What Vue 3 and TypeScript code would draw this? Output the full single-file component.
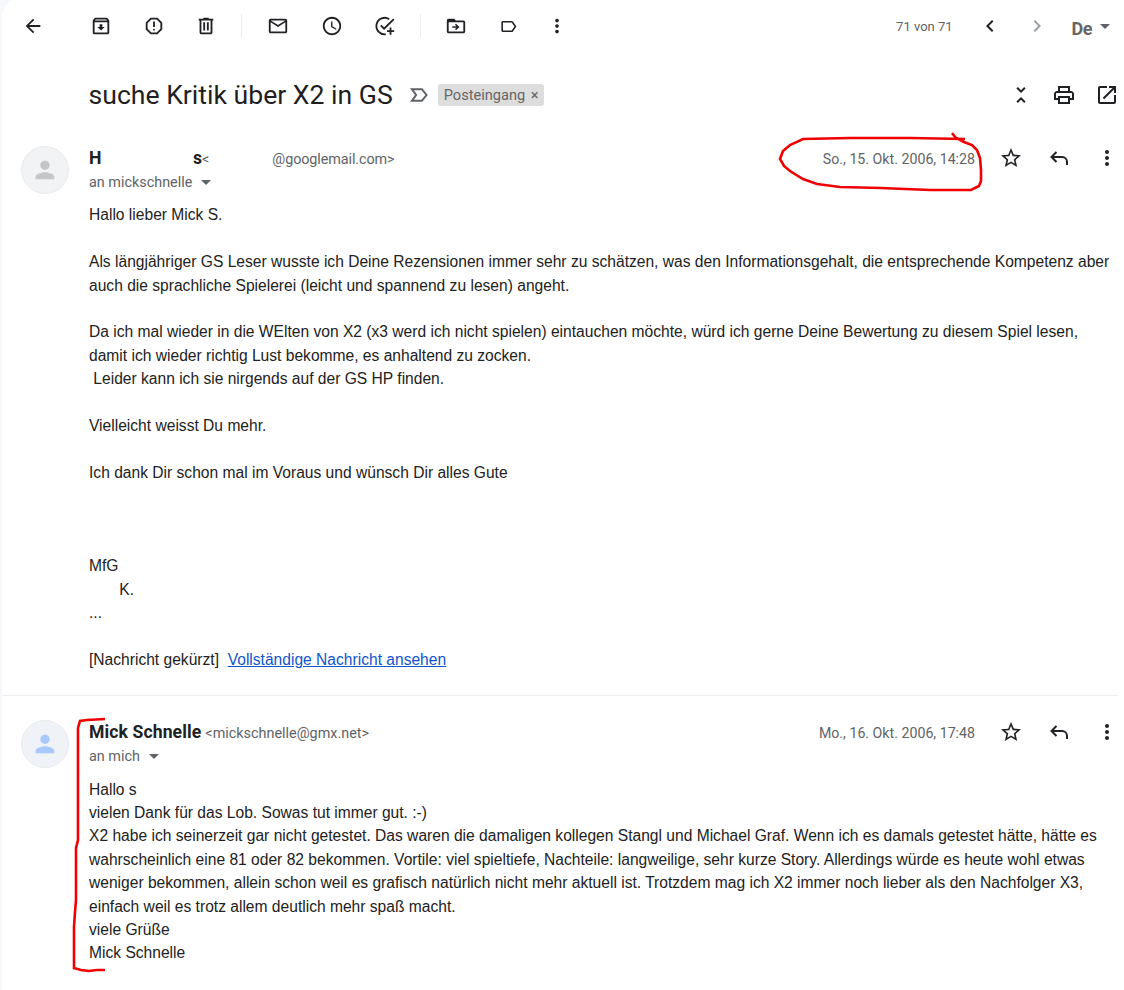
<script setup lang="ts">
const icons: Record<string, string> = {
  back: 'M20 11H7.83l5.59-5.59L12 4l-8 8 8 8 1.41-1.41L7.83 13H20v-2z',
  archive: 'M20.54 5.23l-1.39-1.68C18.88 3.21 18.47 3 18 3H6c-.47 0-.88.21-1.16.55L3.46 5.23C3.17 5.57 3 6.02 3 6.5V19c0 1.1.9 2 2 2h14c1.1 0 2-.9 2-2V6.5c0-.48-.17-.93-.46-1.27zM6.24 5h11.52l.83 1H5.42l.82-1zM5 19V8h14v11H5zm8.45-9h-2.9v3H8l4 4 4-4h-2.55z',
  report: 'M15.73 3H8.27L3 8.27v7.46L8.27 21h7.46L21 15.73V8.27L15.73 3zM19 14.9L14.9 19H9.1L5 14.9V9.1L9.1 5h5.8L19 9.1v5.8zM11 7h2v6h-2zM12 15a1 1 0 1 0 0 2 1 1 0 0 0 0-2z',
  trash: 'M15 4V3H9v1H4v2h1v13c0 1.1.9 2 2 2h10c1.1 0 2-.9 2-2V6h1V4h-5zm2 15H7V6h10v13zM9 8h2v9H9zm4 0h2v9h-2z',
  mail: 'M20 4H4c-1.1 0-2 .9-2 2v12c0 1.1.9 2 2 2h16c1.1 0 2-.9 2-2V6c0-1.1-.9-2-2-2zm0 14H4V8l8 5 8-5v10zm-8-7L4 6h16l-8 5z',
  clock: 'M11.99 2C6.47 2 2 6.48 2 12s4.47 10 9.99 10C17.52 22 22 17.52 22 12S17.52 2 11.99 2zM12 20c-4.42 0-8-3.58-8-8s3.58-8 8-8 8 3.58 8 8-3.58 8-8 8zM12.5 7H11v6l5.25 3.15.75-1.23-4.5-2.67z',
  move: 'M20 6h-8l-2-2H4c-1.11 0-1.99.89-1.99 2L2 18c0 1.1.89 2 2 2h16c1.1 0 2-.9 2-2V8c0-1.1-.9-2-2-2zm0 12H4V8h16v10zM12 9.5l-1.1 1.1 1.7 1.6H8v1.6h4.6l-1.7 1.6 1.1 1.1 3.8-3.5z',
  label: 'M17.63 5.84C17.27 5.33 16.67 5 16 5L5 5.01C3.9 5.01 3 5.9 3 7v10c0 1.1.9 1.99 2 1.99L16 19c.67 0 1.27-.33 1.63-.84L22 12l-4.37-6.16zM16 17H5V7h11l3.55 5L16 17z',
  left: 'M15.41 7.41L14 6l-6 6 6 6 1.41-1.41L10.83 12z',
  right: 'M10 6L8.59 7.41 13.17 12l-4.58 4.59L10 18l6-6z',
  collapse: 'M7.41 18.59L8.82 20 12 16.83 15.17 20l1.41-1.41L12 14l-4.59 4.59zm9.18-13.18L15.17 4 12 7.17 8.82 4 7.41 5.41 12 10l4.59-4.59z',
  print: 'M19 8h-1V3H6v5H5c-1.66 0-3 1.34-3 3v6h4v4h12v-4h4v-6c0-1.66-1.34-3-3-3zM8 5h8v3H8V5zm8 12v2H8v-4h8v2zm2-2v-2H6v2H4v-4c0-.55.45-1 1-1h14c.55 0 1 .45 1 1v4h-2z',
  popout: 'M19 19H5V5h7V3H5c-1.11 0-2 .9-2 2v14c0 1.1.89 2 2 2h14c1.1 0 2-.9 2-2v-7h-2v7zM14 3v2h3.59l-9.83 9.83 1.41 1.41L19 6.41V10h2V3h-7z',
  star: 'M22 9.24l-7.19-.62L12 2 9.19 8.63 2 9.24l5.46 4.73L5.82 21 12 17.27 18.18 21l-1.63-7.03L22 9.24zM12 15.4l-3.76 2.27 1-4.28-3.32-2.88 4.38-.38L12 6.1l1.71 4.04 4.38.38-3.32 2.88 1 4.28L12 15.4z',
  more: 'M12 8c1.1 0 2-.9 2-2s-.9-2-2-2-2 .9-2 2 .9 2 2 2zm0 2c-1.1 0-2 .9-2 2s.9 2 2 2 2-.9 2-2-.9-2-2-2zm0 6c-1.1 0-2 .9-2 2s.9 2 2 2 2-.9 2-2-.9-2-2-2z',
  person: 'M12 12c2.21 0 4-1.79 4-4s-1.79-4-4-4-4 1.79-4 4 1.79 4 4 4zm0 2c-2.67 0-8 1.34-8 4v2h16v-2c0-2.66-5.33-4-8-4z',
}

const firstMail: string[] = [
  'Hallo lieber Mick S.',
  '',
  'Als längjähriger GS Leser wusste ich Deine Rezensionen immer sehr zu schätzen, was den Informationsgehalt, die entsprechende Kompetenz aber',
  'auch die sprachliche Spielerei (leicht und spannend zu lesen) angeht.',
  '',
  'Da ich mal wieder in die WElten von X2 (x3 werd ich nicht spielen) eintauchen möchte, würd ich gerne Deine Bewertung zu diesem Spiel lesen,',
  'damit ich wieder richtig Lust bekomme, es anhaltend zu zocken.',
  ' Leider kann ich sie nirgends auf der GS HP finden.',
  '',
  'Vielleicht weisst Du mehr.',
  '',
  'Ich dank Dir schon mal im Voraus und wünsch Dir alles Gute',
  '',
  '',
  '',
  'MfG',
  '       K.',
  '...',
  '',
]

const secondMail: string[] = [
  'Hallo s',
  'vielen Dank für das Lob. Sowas tut immer gut. :-)',
  'X2 habe ich seinerzeit gar nicht getestet. Das waren die damaligen kollegen Stangl und Michael Graf. Wenn ich es damals getestet hätte, hätte es',
  'wahrscheinlich eine 81 oder 82 bekommen. Vortile: viel spieltiefe, Nachteile: langweilige, sehr kurze Story. Allerdings würde es heute wohl etwas',
  'weniger bekommen, allein schon weil es grafisch natürlich nicht mehr aktuell ist. Trotzdem mag ich X2 immer noch lieber als den Nachfolger X3,',
  'einfach weil es trotz allem deutlich mehr spaß macht.',
  'viele Grüße',
  'Mick Schnelle',
]
</script>

<template>
  <div class="page">
    <div class="panel">
      <div class="toolbar">
        <svg class="icon tool back" viewBox="0 0 24 24"><path :d="icons.back" /></svg>
        <div class="tool-group">
          <svg class="icon tool" viewBox="0 0 24 24"><path :d="icons.archive" /></svg>
          <svg class="icon tool" viewBox="0 0 24 24"><path :d="icons.report" /></svg>
          <svg class="icon tool" viewBox="0 0 24 24"><path :d="icons.trash" /></svg>
        </div>
        <span class="divider"></span>
        <div class="tool-group wide">
          <svg class="icon tool" viewBox="0 0 24 24"><path :d="icons.mail" /></svg>
          <svg class="icon tool" viewBox="0 0 24 24"><path :d="icons.clock" /></svg>
          <svg class="icon tool" viewBox="0 0 24 24">
            <path class="line" d="M16.6 4.6A9 9 0 1 0 12.8 21" />
            <path class="line" d="M7.4 11.4l3.6 3.6L21.6 4.6" />
            <path class="line" d="M18 13.5v8M14.2 17.5h7.8" />
          </svg>
        </div>
        <span class="divider"></span>
        <div class="tool-group">
          <svg class="icon tool" viewBox="0 0 24 24"><path :d="icons.move" /></svg>
          <svg class="icon tool tag" viewBox="0 0 24 24"><path :d="icons.label" /></svg>
          <svg class="icon tool more-tool" viewBox="0 0 24 24"><path :d="icons.more" /></svg>
        </div>
        <div class="pager">
          <span class="count">71 von 71</span>
          <svg class="icon" viewBox="0 0 24 24"><path :d="icons.left" /></svg>
          <svg class="icon disabled" viewBox="0 0 24 24"><path :d="icons.right" /></svg>
          <span class="lang">De</span>
          <span class="caret"></span>
        </div>
      </div>

      <div class="subject-row">
        <h1 class="subject">suche Kritik über X2 in GS</h1>
        <svg class="marker" viewBox="0 0 24 24"><path d="M3.5 5h12l5.5 7-5.5 7h-12l5-7z" /></svg>
        <span class="chip">Posteingang <span class="chip-x">×</span></span>
        <div class="actions">
          <svg class="icon" viewBox="0 0 24 24"><path :d="icons.collapse" /></svg>
          <svg class="icon" viewBox="0 0 24 24"><path :d="icons.print" /></svg>
          <svg class="icon" viewBox="0 0 24 24"><path :d="icons.popout" /></svg>
        </div>
      </div>

      <section class="message first">
        <div class="avatar">
          <svg viewBox="0 0 24 24"><path :d="icons.person" /></svg>
        </div>
        <div class="content">
          <div class="head">
            <div class="who">
              <div class="from">
                <span class="name name-start">H</span>
                <span class="name name-end">s</span>
                <span class="addr">&lt;</span>
                <span class="addr addr-domain">@googlemail.com&gt;</span>
              </div>
              <div class="to">an mickschnelle <span class="caret small"></span></div>
            </div>
            <span class="date">So., 15. Okt. 2006, 14:28</span>
            <div class="msg-actions">
              <svg class="icon" viewBox="0 0 24 24"><path :d="icons.star" /></svg>
              <svg class="icon" viewBox="0 0 24 24"><path class="line" d="M9.5 6L4.5 11l5 5M4.5 11H15a5 5 0 0 1 5 5v3" /></svg>
              <svg class="icon" viewBox="0 0 24 24"><path :d="icons.more" /></svg>
            </div>
          </div>
          <div class="body">
            <div v-for="(line, i) in firstMail" :key="i" class="line-text">{{ line }}</div>
            <div class="line-text">[Nachricht gekürzt]&nbsp; <a class="link" href="#">Vollständige Nachricht ansehen</a></div>
          </div>
        </div>
      </section>

      <div class="separator"></div>

      <section class="message second">
        <div class="avatar known">
          <svg viewBox="0 0 24 24"><path :d="icons.person" /></svg>
        </div>
        <div class="content">
          <div class="head">
            <div class="who">
              <div class="from">
                <span class="name">Mick Schnelle</span>
                <span class="addr">&lt;mickschnelle@gmx.net&gt;</span>
              </div>
              <div class="to">an mich <span class="caret small"></span></div>
            </div>
            <span class="date">Mo., 16. Okt. 2006, 17:48</span>
            <div class="msg-actions">
              <svg class="icon" viewBox="0 0 24 24"><path :d="icons.star" /></svg>
              <svg class="icon" viewBox="0 0 24 24"><path class="line" d="M9.5 6L4.5 11l5 5M4.5 11H15a5 5 0 0 1 5 5v3" /></svg>
              <svg class="icon" viewBox="0 0 24 24"><path :d="icons.more" /></svg>
            </div>
          </div>
          <div class="body">
            <div v-for="(line, i) in secondMail" :key="i" class="line-text">{{ line }}</div>
          </div>
        </div>
      </section>
    </div>

    <!-- red marker scribbles drawn over the mail -->
    <svg class="scribble" viewBox="0 0 1124 990">
      <path d="M952 133L956 138 964 142 972 145 977 150 980 158 981 170 981 181 979 186 971 190 930 190 881 188 840 187 817 184 803 179 790 171 784 166 780 159 783 151 790 145 803 139 850 138 910 138 965 139" />
      <path d="M105 719l-18 1-7 1-2 7 0 112-2 8 0 52-1 12-1 15 0 41 7 2 8 1 8-1 8 0" />
    </svg>
  </div>
</template>

<style>
html,
body {
  margin: 0;
  background: #f6f8fc;
}
</style>

<style scoped>
.page {
  position: relative;
  width: 1124px;
  height: 990px;
  overflow: hidden;
  background: #f6f8fc;
  font-family: Roboto, "Liberation Sans", sans-serif;
  color: #202124;
}

.panel {
  margin-left: 2px;
  height: 990px;
  background: #fff;
  border-top-left-radius: 16px;
}

.icon {
  width: 24px;
  height: 24px;
  flex: none;
  fill: #202124;
}

.tool {
  width: 22px;
  height: 22px;
}

.line {
  fill: none;
  stroke: #202124;
  stroke-width: 2;
}

.toolbar {
  display: flex;
  align-items: center;
  height: 52px;
  padding-left: 20px;
}

.back {
  margin-right: 46px;
}

.tool-group {
  display: flex;
  align-items: center;
  gap: 30.5px;
}

.wide {
  gap: 31.5px;
  margin-left: 1px;
}

.divider {
  width: 1px;
  height: 24px;
  margin: 0 24px;
  background: #eceff1;
}

.tag {
  width: 19px;
  height: 19px;
  margin: 0 1.5px;
}

.more-tool {
  margin-left: -4px;
}

.pager {
  display: flex;
  align-items: center;
  margin-left: auto;
  padding-right: 14px;
}

.count {
  margin-right: 25px;
  font-size: 13px;
  color: #5f6368;
}

.pager .icon + .icon {
  margin-left: 23px;
}

.disabled {
  fill: #9aa0a6;
}

.lang {
  margin-top: 4px;
  margin-left: 23px;
  margin-right: 8px;
  font-size: 18px;
  font-weight: 700;
  letter-spacing: -0.5px;
  color: #666;
}

.caret {
  display: inline-block;
  width: 0;
  height: 0;
  border-left: 5px solid transparent;
  border-right: 5px solid transparent;
  border-top: 5px solid #5f6368;
}

.subject-row {
  display: flex;
  align-items: center;
  height: 54px;
  margin-top: 16px;
  padding-left: 86.5px;
  padding-right: 5px;
}

.subject {
  margin: 0 0 2px;
  font-size: 26.6px;
  font-weight: 400;
  white-space: nowrap;
  color: #1f1f1f;
}

.marker {
  width: 20px;
  height: 20px;
  margin-left: 16px;
  fill: none;
  stroke: #5f6368;
  stroke-width: 2.4;
}

.chip {
  margin-left: 9px;
  height: 22px;
  padding: 0 5px 0 6px;
  border-radius: 3px;
  background: #dddddd;
  font-size: 14.6px;
  line-height: 23px;
  color: #666;
  white-space: nowrap;
}

.chip-x {
  margin-left: 2px;
}

.actions {
  display: flex;
  gap: 19px;
  margin-left: auto;
}

.message {
  display: flex;
  padding-left: 19px;
  padding-right: 5px;
  padding-top: 24px;
}

.avatar {
  display: flex;
  align-items: center;
  justify-content: center;
  flex: none;
  width: 46px;
  height: 46px;
  margin-right: 20px;
  border: 1px solid #e8eaed;
  border-radius: 50%;
  background: #f1f3f4;
}

.avatar svg {
  width: 28px;
  height: 28px;
  fill: #c4c7c5;
}

.known {
  background: #eff2f7;
}

.known svg {
  fill: #a8c7fa;
}

.content {
  flex: 1;
  min-width: 0;
}

.head {
  display: flex;
  align-items: flex-start;
}

.who {
  flex: 1;
}

.from {
  display: flex;
  align-items: baseline;
  height: 25px;
  line-height: 24px;
}

.name {
  font-size: 17.6px;
  font-weight: 700;
  letter-spacing: 0.1px;
  color: #202124;
}

.name-start {
  width: 15px;
}

.name-end {
  width: 6px;
  margin-left: 89px;
  text-align: right;
}

.addr {
  margin-left: 3px;
  font-size: 14.4px;
  color: #5f6368;
}

.addr-domain {
  margin-left: 63px;
  letter-spacing: -0.1px;
}

.second .addr {
  margin-left: 4px;
}

.to {
  height: 24px;
  line-height: 24px;
  font-size: 14.4px;
  color: #5f6368;
}

.small {
  margin-left: 5px;
  vertical-align: 2px;
}

.date {
  height: 26px;
  line-height: 26px;
  font-size: 14.2px;
  color: #5f6368;
}

.msg-actions {
  display: flex;
  gap: 24px;
  margin-left: 24px;
}

.body {
  margin-top: 8.3px;
  font-family: "Liberation Sans", Arial, sans-serif;
  font-size: 15.6px;
  line-height: 23.4px;
  color: #222;
}

.line-text {
  white-space: pre;
  min-height: 23.4px;
}

.link {
  color: #1155cc;
}

.separator {
  height: 1px;
  margin-top: 24px;
  margin-right: 5px;
  background: #eceff1;
}

.scribble {
  position: absolute;
  left: 0;
  top: 0;
  width: 1124px;
  height: 990px;
  pointer-events: none;
  fill: none;
  stroke: #f00000;
  stroke-width: 2.6;
}
</style>
